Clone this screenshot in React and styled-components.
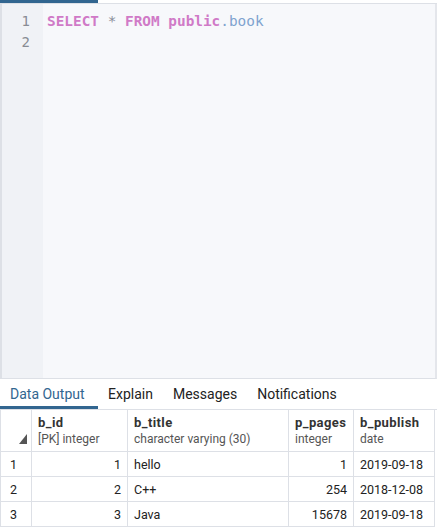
import React from "react";
import styled, { createGlobalStyle } from "styled-components";

const Global = createGlobalStyle`
  html, body { margin: 0; padding: 0; background: #ffffff; }
  body { font-family: Roboto, "Noto Sans", sans-serif; }
  #root { width: 437px; height: 528px; overflow: hidden; }
`;

const Page = styled.div`
  width: 437px;
  height: 528px;
  display: flex;
  flex-direction: column;
  background: #fff;
`;

const TopStrip = styled.div`
  height: 3px;
  display: flex;
  border-bottom: 1px solid #dde0e6;
  flex: none;
`;

const TopActive = styled.div`
  width: 98px;
  background: #326690;
`;

const Editor = styled.div`
  flex: none;
  height: 374px;
  display: flex;
  background: #f7f8fb;
  border-left: 2px solid #dde0e6;
  border-right: 2px solid #e4e6eb;
  border-bottom: 1px solid #dde0e6;
`;

const Gutter = styled.div`
  width: 41px;
  background: #f0f2f6;
  padding-top: 7px;
  display: flex;
  flex-direction: column;
  align-items: flex-end;
  padding-right: 13px;
  box-sizing: border-box;
`;

const LineNo = styled.div`
  font-family: "DejaVu Sans Mono", monospace;
  font-size: 14px;
  line-height: 21px;
  color: #888c94;
`;

const Code = styled.div`
  padding: 7px 0 0 4px;
  font-family: "DejaVu Sans Mono", monospace;
  font-size: 14.4px;
  line-height: 21px;
  white-space: pre;
`;

const Tok = styled.span`
  color: ${(p) => p.$c};
  font-weight: ${(p) => (p.$b ? 700 : 400)};
`;

const Tabs = styled.div`
  flex: none;
  height: 30px;
  display: flex;
  align-items: stretch;
  border-bottom: 1px solid #dde0e6;
`;

const Tab = styled.div`
  padding: 0 10px;
  font-size: 14px;
  color: ${(p) => (p.$active ? "#326690" : "#222")};
  display: flex;
  align-items: center;
  box-sizing: border-box;
  border-bottom: 3px solid ${(p) => (p.$active ? "#326690" : "transparent")};
  padding-top: 3px;
  min-width: ${(p) => p.$w}px;
`;

const Table = styled.div`
  display: grid;
  grid-template-columns: 31px 96px 161px 65px 81px;
  width: 434px;
  border-left: 1px solid #dde0e6;
`;

const HeadCell = styled.div`
  height: 42px;
  box-sizing: border-box;
  border-right: 1px solid #dde0e6;
  border-bottom: 1px solid #dde0e6;
  padding: 5px 6px 0;
  position: relative;
  background: #fff;
`;

const ColName = styled.div`
  font-size: 13px;
  font-weight: 700;
  color: #333;
  letter-spacing: 0.4px;
  line-height: 16px;
`;

const ColType = styled.div`
  font-size: 12px;
  color: #555;
  line-height: 16px;
`;

const Corner = styled.svg`
  position: absolute;
  left: 18px;
  bottom: 7px;
`;

const Cell = styled.div`
  height: 25px;
  box-sizing: border-box;
  border-right: 1px solid #dde0e6;
  border-bottom: 1px solid #dde0e6;
  padding: 0 6px 0 ${(p) => (p.$num ? 9 : 6)}px;
  font-size: 12.5px;
  color: #222;
  display: flex;
  align-items: center;
  justify-content: ${(p) => (p.$right ? "flex-end" : "flex-start")};
`;

const cols = [
  { name: "b_id", type: "[PK] integer" },
  { name: "b_title", type: "character varying (30)" },
  { name: "p_pages", type: "integer" },
  { name: "b_publish", type: "date" },
];

const rows = [
  [1, "hello", 1, "2019-09-18"],
  [2, "C++", 254, "2018-12-08"],
  [3, "Java", 15678, "2019-09-18"],
];

export default function App() {
  const kw = "#d07ac7";
  return (
    <>
      <Global />
      <Page>
        <TopStrip>
          <TopActive />
        </TopStrip>
        <Editor>
          <Gutter>
            <LineNo>1</LineNo>
            <LineNo>2</LineNo>
          </Gutter>
          <Code>
            <Tok $c={kw} $b>SELECT</Tok>
            <Tok $c="#8a8f99"> * </Tok>
            <Tok $c={kw} $b>FROM</Tok>
            <Tok $c={kw} $b> public</Tok>
            <Tok $c="#7fa3cf">.book</Tok>
          </Code>
        </Editor>
        <Tabs>
          <Tab $active $w={98}>Data Output</Tab>
          <Tab>Explain</Tab>
          <Tab>Messages</Tab>
          <Tab>Notifications</Tab>
        </Tabs>
        <Table>
          <HeadCell>
            <Corner width="8" height="10" viewBox="0 0 8 10">
              <polygon points="8,0 8,10 0,10" fill="#555" />
            </Corner>
          </HeadCell>
          {cols.map((c) => (
            <HeadCell key={c.name}>
              <ColName>{c.name}</ColName>
              <ColType>{c.type}</ColType>
            </HeadCell>
          ))}
          {rows.map((r, i) => (
            <React.Fragment key={i}>
              <Cell $num>{i + 1}</Cell>
              <Cell $right>{r[0]}</Cell>
              <Cell>{r[1]}</Cell>
              <Cell $right>{r[2]}</Cell>
              <Cell>{r[3]}</Cell>
            </React.Fragment>
          ))}
        </Table>
      </Page>
    </>
  );
}
